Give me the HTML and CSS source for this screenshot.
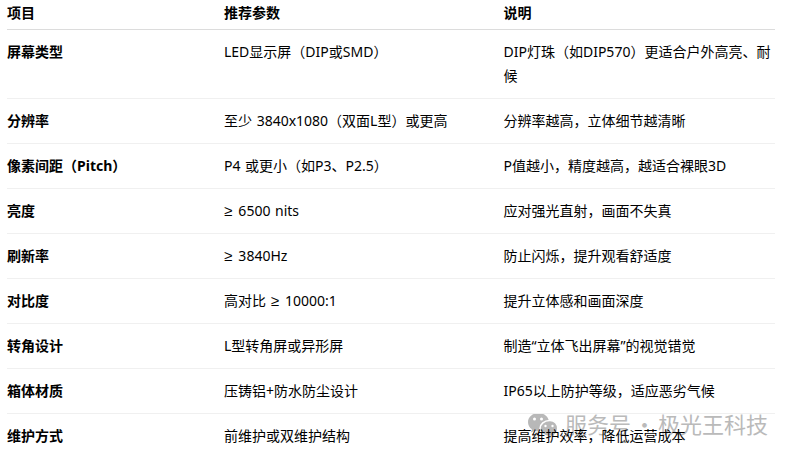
FILE: index.html
```html
<!DOCTYPE html>
<html lang="zh-CN">
<head>
<meta charset="utf-8">
<title>参数表</title>
<link rel="stylesheet" href="styles.css">
</head>
<body>
<div class="page">
<div class="mark">
<svg class="wx" viewBox="0 0 32 27" width="32" height="27" aria-hidden="true">
<path d="M10.500 1C4.700 1 0 5.100 0 10.200c0 2.900 1.500 5.400 3.900 7.100L3 20.500l3.500-1.800c1.200.4 2.600.6 4 .6 5.800 0 10.500-4.100 10.500-9.100S16.300 1 10.500 1z"/>
<path class="front" d="M21.500 8.500c-5.200 0-9.500 3.600-9.500 8s4.300 8 9.500 8c1 0 2-.1 2.900-.4l3 1.600-.7-2.600c1.800-1.400 3-3.700 3-6.600 0-4.400-3-8-7.700-8z"/>
<circle class="eye" cx="6.500" cy="7" r="1.500"/><circle class="eye" cx="13.500" cy="7" r="1.500"/>
<circle class="eye" cx="17.500" cy="14" r="1.200"/><circle class="eye" cx="24.500" cy="14" r="1.200"/>
</svg>
<span class="mark-text">服务号<span class="dot">·</span>极光王科技</span>
</div>
<table class="spec">
<colgroup><col class="c1"><col class="c2"><col class="c3"></colgroup>
<thead><tr><th>项目</th><th>推荐参数</th><th>说明</th></tr></thead>
<tbody>
<tr><th>屏幕类型</th><td>LED显示屏（DIP或SMD）</td><td>DIP灯珠（如DIP570）更适合户外高亮、耐候</td></tr>
<tr><th>分辨率</th><td>至少 3840x1080（双面L型）或更高</td><td>分辨率越高，立体细节越清晰</td></tr>
<tr><th>像素间距（Pitch）</th><td>P4 或更小（如P3、P2.5）</td><td>P值越小，精度越高，越适合裸眼3D</td></tr>
<tr><th>亮度</th><td><span class="ge">≥</span> 6500 nits</td><td>应对强光直射，画面不失真</td></tr>
<tr><th>刷新率</th><td><span class="ge">≥</span> 3840Hz</td><td>防止闪烁，提升观看舒适度</td></tr>
<tr><th>对比度</th><td>高对比 <span class="ge">≥</span> 10000:1</td><td>提升立体感和画面深度</td></tr>
<tr><th>转角设计</th><td>L型转角屏或异形屏</td><td>制造“立体飞出屏幕”的视觉错觉</td></tr>
<tr><th>箱体材质</th><td>压铸铝+防水防尘设计</td><td>IP65以上防护等级，适应恶劣气候</td></tr>
<tr><th>维护方式</th><td>前维护或双维护结构</td><td>提高维护效率，降低运营成本</td></tr>
</tbody>
</table>
</div>
</body>
</html>
```

FILE: styles.css
```css
html, body { margin: 0; padding: 0; background: #fff; }
body { width: 794px; height: 456px; overflow: hidden; }
.page { position: relative; width: 794px; height: 456px; overflow: hidden; padding: 1px 0 0 7px; box-sizing: border-box; }
.spec {
  position: relative;
  width: 768px; table-layout: fixed; border-collapse: collapse;
  font: 14px/24px "Noto Sans", "Noto Sans CJK SC", sans-serif; color: #000; word-spacing: 1px;
}
.c1 { width: 217px; } .c2 { width: 279.500px; } .c3 { width: 271.500px; }
.spec th, .spec td { padding: 10px 0; text-align: left; vertical-align: top; font-weight: 400; }
.spec th { font-weight: 700; }
.spec thead th { padding: 0 0 4px; border-bottom: 1px solid #dcdcdc; }
.spec tbody tr { border-bottom: 1px solid #f0f0f0; }
.spec tbody tr:last-child { border-bottom: 0; }
.ge { font-family: "Liberation Sans", sans-serif; font-size: 15px; margin-right: 1.500px; }
.mark { position: absolute; left: 528px; top: 408px; display: flex; align-items: flex-start; gap: 5px; color: #bababa; }
.wx { display: block; margin-top: 4px; fill: #b8b8b8; }
.front { stroke: #fff; stroke-width: 1.500px; }
.eye { fill: #fff; }
.mark-text { font: 22px/30px "Noto Sans CJK SC", sans-serif; white-space: nowrap; }
.dot { display: inline-block; width: 27px; text-align: center; }
```
